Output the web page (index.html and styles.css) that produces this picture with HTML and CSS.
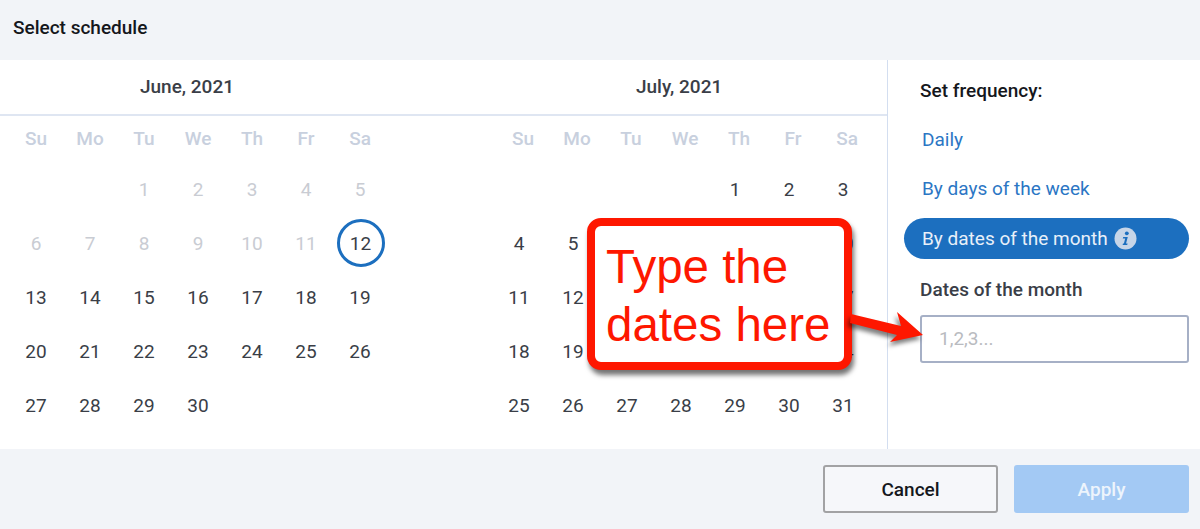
FILE: index.html
```html
<!DOCTYPE html>
<html lang="en">

<head>
  <meta charset="UTF-8">
  <title>Select schedule</title>
  <link rel="stylesheet" href="styles.css">
</head>

<body>
  <div class="dialog">
    <div class="header">Select schedule</div>

    <div class="main">
      <div class="calendars">
        <div class="month month-june">
          <div class="month-title">June, 2021</div>
          <div class="days">
            <span class="wd">Su</span><span class="wd">Mo</span><span class="wd">Tu</span><span class="wd">We</span><span class="wd">Th</span><span class="wd">Fr</span><span class="wd">Sa</span>
            <span></span><span></span><span class="off">1</span><span class="off">2</span><span class="off">3</span><span class="off">4</span><span class="off">5</span>
            <span class="off">6</span><span class="off">7</span><span class="off">8</span><span class="off">9</span><span class="off">10</span><span class="off">11</span><span class="today"><b>12</b></span>
            <span>13</span><span>14</span><span>15</span><span>16</span><span>17</span><span>18</span><span>19</span>
            <span>20</span><span>21</span><span>22</span><span>23</span><span>24</span><span>25</span><span>26</span>
            <span>27</span><span>28</span><span>29</span><span>30</span>
          </div>
        </div>

        <div class="month month-july">
          <div class="month-title">July, 2021</div>
          <div class="days">
            <span class="wd">Su</span><span class="wd">Mo</span><span class="wd">Tu</span><span class="wd">We</span><span class="wd">Th</span><span class="wd">Fr</span><span class="wd">Sa</span>
            <span></span><span></span><span></span><span></span><span>1</span><span>2</span><span>3</span>
            <span>4</span><span>5</span><span>6</span><span>7</span><span>8</span><span>9</span><span>10</span>
            <span>11</span><span>12</span><span>13</span><span>14</span><span>15</span><span>16</span><span>17</span>
            <span>18</span><span>19</span><span>20</span><span>21</span><span>22</span><span>23</span><span>24</span>
            <span>25</span><span>26</span><span>27</span><span>28</span><span>29</span><span>30</span><span>31</span>
          </div>
        </div>
      </div>

      <div class="side">
        <div class="side-title">Set frequency:</div>
        <a class="freq">Daily</a>
        <a class="freq">By days of the week</a>
        <a class="freq active">By dates of the month
          <svg class="info" width="23" height="23" viewBox="0 0 23 23">
            <circle cx="11.5" cy="11.5" r="11" fill="#c6d5e8"/>
            <circle cx="12.8" cy="6.3" r="1.9" fill="#1c6fbf"/>
            <path d="M9.2 10h4.6l-1.8 6.6h1.6l-.4 1.4H8.6l.4-1.4h.9l1.3-5.2H8.8z" fill="#1c6fbf"/>
          </svg>
        </a>
        <div class="field-label">Dates of the month</div>
        <div class="field">1,2,3...</div>
      </div>
    </div>

    <div class="footer">
      <button class="btn btn-cancel">Cancel</button>
      <button class="btn btn-apply">Apply</button>
    </div>

    <!-- annotation on top of the dialog -->
    <div class="callout">Type the<br>dates here</div>
    <svg class="arrow" width="90" height="50" viewBox="0 0 90 50">
      <path d="M1 9 L51 21 L47 7 L73 30 L40 37 L47 30 L0 18 Z" fill="#fe1700"/>
    </svg>
  </div>
</body>

</html>
```

FILE: styles.css
```css
* {
  box-sizing: border-box;
}

body {
  margin: 0;
  font-family: Roboto, "Liberation Sans", sans-serif;
  color: #3a3e47;
  background: #fff;
}

.dialog {
  position: relative;
  width: 1200px;
  height: 529px;
  overflow: hidden;
}

.header {
  height: 60px;
  padding: 17px 13px 0;
  background: #f2f4f8;
  color: #15171c;
  font-size: 19px;
  font-weight: 500;
  line-height: 22px;
}

.main {
  display: flex;
  height: 389px;
}

.calendars {
  display: flex;
  width: 888px;
  border-right: 1px solid #d3def0;
}

.month-june {
  width: 486px;
}

.month-july {
  width: 401px;
}

.month-title {
  height: 56px;
  padding-top: 15px;
  border-bottom: 2px solid #dfe6f2;
  font-size: 19px;
  font-weight: 500;
  line-height: 24px;
}

.month-june .month-title {
  padding-right: 112px;
  text-align: center;
}

.month-july .month-title {
  padding-left: 150px;
}

.days {
  display: grid;
  grid-template-columns: repeat(7, 54px);
  grid-template-rows: 46px repeat(5, 54px);
  font-size: 19px;
}

.month-june .days {
  margin-left: 9px;
}

.month-july .days {
  margin-left: 6px;
}

.days span {
  display: flex;
  align-items: center;
  justify-content: center;
}

.days .wd {
  padding-bottom: 2px;
  color: #c8d0de;
  font-weight: 500;
}

.month-july .days .wd {
  margin-left: 8px;
}

.days .off {
  color: #c9ccd3;
}

.today b {
  display: flex;
  align-items: center;
  justify-content: center;
  width: 48px;
  height: 48px;
  margin-left: 1px;
  border: 3px solid #1c6fbf;
  border-radius: 50%;
  font-weight: 400;
}

.side {
  flex: 1;
  display: flex;
  flex-direction: column;
  padding: 20px 11px 0 16px;
}

.side-title {
  padding-left: 16px;
  color: #15171c;
  font-size: 19px;
  font-weight: 500;
  line-height: 22px;
}

.freq {
  display: flex;
  align-items: center;
  height: 41px;
  margin-top: 8px;
  padding: 0 0 3px 18px;
  border-radius: 21px;
  color: #2b76c4;
  font-size: 19px;
}

.freq:first-of-type {
  margin-top: 18px;
}

.freq.active {
  padding-bottom: 0;
  background: #1c6fbf;
  color: #e8f0f9;
}

.info {
  margin-left: 6px;
}

.field-label {
  margin-top: 20px;
  padding-left: 16px;
  font-size: 19px;
  font-weight: 500;
  line-height: 22px;
}

.field {
  height: 48px;
  margin: 14px 0 0 16px;
  padding-left: 17px;
  border: 2px solid #a6b0c6;
  border-radius: 3px;
  color: #b9bbc0;
  font-size: 19px;
  line-height: 44px;
}

.footer {
  display: flex;
  justify-content: flex-end;
  gap: 16px;
  height: 80px;
  padding: 16px 11px 0 0;
  background: #f2f4f8;
}

.btn {
  width: 175px;
  height: 48px;
  border-radius: 3px;
  font-family: inherit;
  font-size: 19px;
  font-weight: 500;
}

.btn-cancel {
  border: 2px solid #a2a2a4;
  background: #f6f7fa;
  color: #15171c;
}

.btn-apply {
  border: none;
  background: #a3c9f4;
  color: #edf4fc;
}

.callout {
  position: absolute;
  left: 587px;
  top: 218px;
  width: 265px;
  height: 152px;
  padding: 12px 0 0 11px;
  border: 8px solid #fe1700;
  border-radius: 14px;
  background: #fff;
  box-shadow: 2px 5px 5px rgba(0, 0, 0, 0.55);
  color: #fe1700;
  font-family: "Liberation Sans", sans-serif;
  font-size: 47.5px;
  line-height: 58px;
  white-space: nowrap;
}

.arrow {
  position: absolute;
  left: 850px;
  top: 305px;
  overflow: visible;
  filter: drop-shadow(-2px 4px 2px rgba(0, 0, 0, 0.5));
}
```
